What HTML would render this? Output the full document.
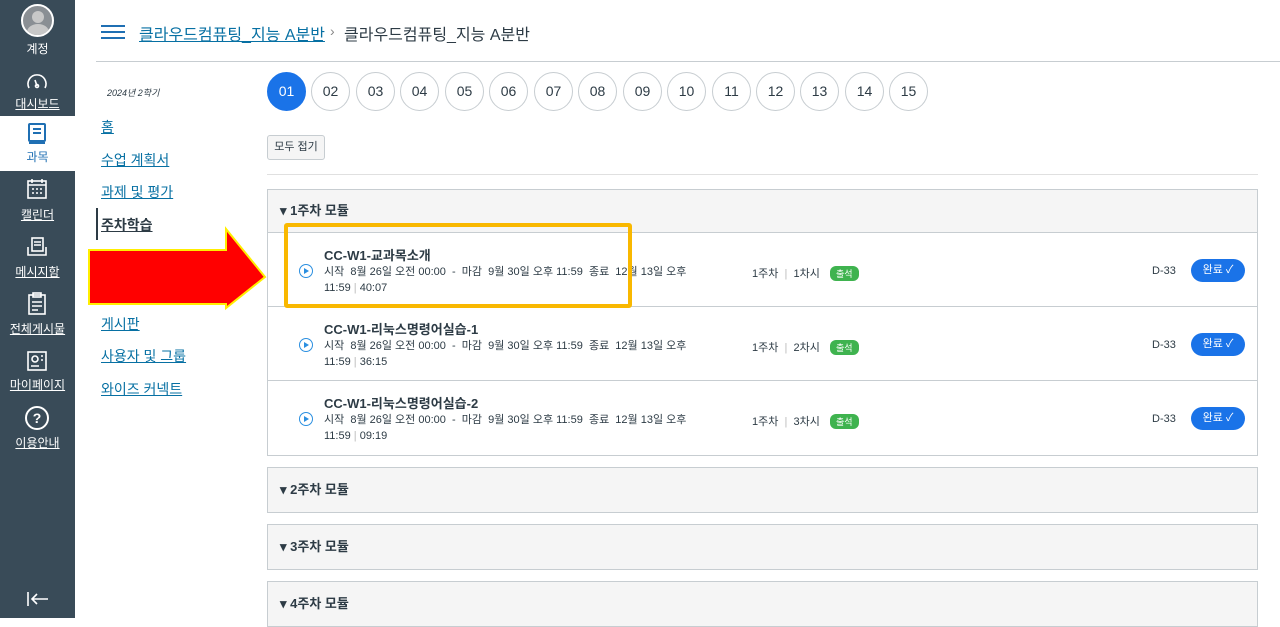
<!DOCTYPE html>
<html><head><meta charset="utf-8"><style>
*{box-sizing:border-box;margin:0;padding:0}
body{width:1280px;height:618px;overflow:hidden;background:#fff;font-family:"Liberation Sans","Noto Sans CJK KR",sans-serif;position:relative;color:#2d3b45}
.side{position:absolute;left:0;top:0;width:75px;height:618px;background:#394b58}
.si{position:absolute;left:0;width:75px;text-align:center;color:#fff;font-size:12px}
.si u{text-decoration:underline}
.abs{position:absolute}
.nav a{position:absolute;left:101px;color:#0770a3;font-size:14px;text-decoration:underline}
.pill{position:absolute;top:72px;width:39px;height:39px;border-radius:50%;border:1px solid #c7cdd1;font-size:14px;text-align:center;line-height:37px;color:#2d3b45;background:#fff}
.mod{position:absolute;left:267px;width:991px;border:1px solid #c7cdd1;background:#f5f5f5}
.mh{font-size:13px;font-weight:bold;padding-left:12px;color:#2d3b45}
.item{position:absolute;left:267px;width:991px;border:1px solid #c7cdd1;border-top:none;background:#fff}
.t{position:absolute;left:56px;top:12px;font-size:13px;font-weight:bold;color:#2d3b45}
.d{position:absolute;left:56px;top:31px;font-size:11px;line-height:16px;color:#2d3b45;width:400px}
.play{position:absolute;left:31px;top:31px;width:14px;height:14px;border:1.5px solid #2b8fe0;border-radius:50%}
.play:after{content:"";position:absolute;left:4px;top:3px;border-left:5px solid #2b8fe0;border-top:3px solid transparent;border-bottom:3px solid transparent}
.wk{position:absolute;left:484px;top:32px;font-size:11px}
.att{position:absolute;left:562px;top:33px;background:#3fb34f;color:#fff;font-size:9px;border-radius:6px;padding:1px 6px}
.dd{position:absolute;left:884px;top:32px;font-size:11px}
.done{position:absolute;left:923px;top:26px;width:54px;height:23px;border-radius:12px;background:#1a73e8;color:#fff;font-size:11px;line-height:23px;text-align:center}
</style></head><body>
<div class="side">
  <div style="position:absolute;left:0;top:116px;width:75px;height:55px;background:#fff"></div>
  <div class="abs" style="left:21px;top:4px;width:33px;height:33px;border-radius:50%;border:2px solid #fff;background:#8a8f94;overflow:hidden"><div style="position:absolute;left:9px;top:5px;width:12px;height:12px;border-radius:50%;background:#c8c8c8"></div><div style="position:absolute;left:4px;top:18px;width:22px;height:16px;border-radius:50%;background:#c8c8c8"></div></div>
  <div class="si" style="top:40px">계정</div>
  <svg class="abs" style="left:25px;top:72px" width="24" height="18" viewBox="0 0 24 18" fill="none" stroke="#fff" stroke-width="1.6"><path d="M4 16A9 9 0 1 1 20 16"/><path d="M12 14L10 8"/><circle cx="12" cy="14" r="1.5"/></svg>
  <div class="si" style="top:95px"><u>대시보드</u></div>
  <svg class="abs" style="left:27px;top:122px" width="20" height="24" viewBox="0 0 20 24" fill="none" stroke="#1f6fb3" stroke-width="2"><rect x="2" y="2" width="16" height="17" rx="1"/><path d="M6 7h8M6 11h8M2 21h16"/></svg>
  <div class="si" style="top:148px;color:#1f6fb3">과목</div>
  <svg class="abs" style="left:26px;top:178px" width="22" height="22" viewBox="0 0 22 22" fill="none" stroke="#fff" stroke-width="1.6"><rect x="2" y="3" width="18" height="17"/><path d="M2 7h18M6 1v4M16 1v4"/><path d="M6 11h2M10 11h2M14 11h2M6 15h2M10 15h2M14 15h2"/></svg>
  <div class="si" style="top:206px"><u>캘린더</u></div>
  <svg class="abs" style="left:26px;top:236px" width="22" height="22" viewBox="0 0 22 22" fill="none" stroke="#fff" stroke-width="1.6"><rect x="6" y="2" width="11" height="13"/><path d="M8 6h7M8 9h7M2 11v8h18v-8"/></svg>
  <div class="si" style="top:263px"><u>메시지함</u></div>
  <svg class="abs" style="left:27px;top:292px" width="20" height="24" viewBox="0 0 20 24" fill="none" stroke="#fff" stroke-width="1.6"><rect x="2" y="3" width="16" height="19"/><rect x="6" y="1" width="8" height="4"/><path d="M5 10h10M5 14h10M5 18h6"/></svg>
  <div class="si" style="top:320px"><u>전체게시물</u></div>
  <svg class="abs" style="left:26px;top:350px" width="22" height="22" viewBox="0 0 22 22" fill="none" stroke="#fff" stroke-width="1.6"><rect x="2" y="2" width="18" height="18"/><circle cx="9" cy="9" r="3"/><path d="M5 16h8M15 6h2M15 10h2"/></svg>
  <div class="si" style="top:376px"><u>마이페이지</u></div>
  <div class="abs" style="left:25px;top:406px;width:24px;height:24px;border:2px solid #fff;border-radius:50%;color:#fff;font-size:14px;font-weight:bold;text-align:center;line-height:20px">?</div>
  <div class="si" style="top:434px"><u>이용안내</u></div>
  <svg class="abs" style="left:26px;top:590px" width="24" height="18" viewBox="0 0 24 18" fill="none" stroke="#fff" stroke-width="1.6"><path d="M2 2v14M22 9H6M11 4L6 9l5 5"/></svg>
</div>

<svg class="abs" style="left:101px;top:24px" width="24" height="16" viewBox="0 0 24 16" stroke="#1f6fb3" stroke-width="2"><path d="M0 2h24M0 8h24M0 14h24"/></svg>
<div class="abs" style="left:139px;top:21px;font-size:16px;color:#0770a3;text-decoration:underline">클라우드컴퓨팅_지능 A분반</div>
<div class="abs" style="left:330px;top:23px;font-size:14px;color:#888">›</div>
<div class="abs" style="left:344px;top:21px;font-size:16px;color:#2d3b45">클라우드컴퓨팅_지능 A분반</div>
<div class="abs" style="left:96px;top:61px;width:1184px;height:1px;background:#c7cdd1"></div>

<div class="abs" style="left:107px;top:86px;font-size:9px;font-style:italic;color:#2d3b45">2024년 2학기</div>
<div class="nav">
<a style="top:117px">홈</a>
<a style="top:150px">수업 계획서</a>
<a style="top:182px">과제 및 평가</a>
<a style="top:215px;color:#2d3b45;font-weight:bold">주차학습</a>
<a style="top:281px">공지</a>
<a style="top:314px">게시판</a>
<a style="top:346px">사용자 및 그룹</a>
<a style="top:379px">와이즈 커넥트</a>
</div>
<div class="abs" style="left:96px;top:208px;width:2px;height:32px;background:#2d3b45"></div>

<div class="pill" style="left:267px;background:#1a73e8;color:#fff;border-color:#1a73e8">01</div>
<div class="pill" style="left:311px">02</div><div class="pill" style="left:356px">03</div><div class="pill" style="left:400px">04</div><div class="pill" style="left:445px">05</div><div class="pill" style="left:489px">06</div><div class="pill" style="left:534px">07</div><div class="pill" style="left:578px">08</div><div class="pill" style="left:623px">09</div><div class="pill" style="left:667px">10</div><div class="pill" style="left:712px">11</div><div class="pill" style="left:756px">12</div><div class="pill" style="left:800px">13</div><div class="pill" style="left:845px">14</div><div class="pill" style="left:889px">15</div>

<div class="abs" style="left:267px;top:135px;width:58px;height:25px;border:1px solid #c7cdd1;border-radius:3px;background:#f5f5f5;font-size:11px;text-align:center;line-height:23px">모두 접기</div>
<div class="abs" style="left:267px;top:174px;width:991px;height:1px;background:#e0e0e0"></div>

<div class="mod" style="top:189px;height:44px;line-height:42px"><div class="mh">▾ 1주차 모듈</div></div>
<div class="item" style="top:233px;height:74px"><div class="play"></div><div class="t">CC-W1-교과목소개</div><div class="d">시작 &nbsp;8월 26일 오전 00:00 &nbsp;- &nbsp;마감 &nbsp;9월 30일 오후 11:59 &nbsp;종료 &nbsp;12월 13일 오후<br>11:59 <span style="color:#bbb">|</span> 40:07</div><div class="wk">1주차 <span style="color:#bbb">&nbsp;|&nbsp;</span> 1차시</div><div class="att">출석</div><div class="dd">D-33</div><div class="done">완료 ✓</div></div>
<div class="item" style="top:307px;height:74px"><div class="play"></div><div class="t">CC-W1-리눅스명령어실습-1</div><div class="d">시작 &nbsp;8월 26일 오전 00:00 &nbsp;- &nbsp;마감 &nbsp;9월 30일 오후 11:59 &nbsp;종료 &nbsp;12월 13일 오후<br>11:59 <span style="color:#bbb">|</span> 36:15</div><div class="wk">1주차 <span style="color:#bbb">&nbsp;|&nbsp;</span> 2차시</div><div class="att">출석</div><div class="dd">D-33</div><div class="done">완료 ✓</div></div>
<div class="item" style="top:381px;height:75px"><div class="play"></div><div class="t">CC-W1-리눅스명령어실습-2</div><div class="d">시작 &nbsp;8월 26일 오전 00:00 &nbsp;- &nbsp;마감 &nbsp;9월 30일 오후 11:59 &nbsp;종료 &nbsp;12월 13일 오후<br>11:59 <span style="color:#bbb">|</span> 09:19</div><div class="wk">1주차 <span style="color:#bbb">&nbsp;|&nbsp;</span> 3차시</div><div class="att">출석</div><div class="dd">D-33</div><div class="done">완료 ✓</div></div>

<div class="mod" style="top:467px;height:46px;line-height:44px"><div class="mh">▾ 2주차 모듈</div></div>
<div class="mod" style="top:524px;height:46px;line-height:44px"><div class="mh">▾ 3주차 모듈</div></div>
<div class="mod" style="top:581px;height:46px;line-height:44px"><div class="mh">▾ 4주차 모듈</div></div>

<div class="abs" style="left:284px;top:223px;width:348px;height:85px;border:4px solid #f9b800;border-radius:3px"></div>
<svg class="abs" style="left:86px;top:226px" width="182" height="86" viewBox="0 0 182 86"><polygon points="3,24 140,24 140,3 179,51 140,82 140,78 3,78" transform="translate(0,0)" fill="#ff0000" stroke="#ffee00" stroke-width="2"/></svg>
</body></html>
